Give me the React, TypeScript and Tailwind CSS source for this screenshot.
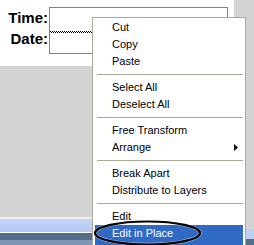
import React from "react";

type Item = { label?: string; sep?: boolean; arrow?: boolean; active?: boolean };

const items: Item[] = [
  { label: "Cut" },
  { label: "Copy" },
  { label: "Paste" },
  { sep: true },
  { label: "Select All" },
  { label: "Deselect All" },
  { sep: true },
  { label: "Free Transform" },
  { label: "Arrange", arrow: true },
  { sep: true },
  { label: "Break Apart" },
  { label: "Distribute to Layers" },
  { sep: true },
  { label: "Edit" },
  { label: "Edit in Place", active: true },
];

export default function App() {
  return (
    <div className="relative w-[254px] h-[245px] overflow-hidden flex flex-col bg-[#d4d4d4]">
      {/* top area */}
      <div className="flex h-[66px]">
        <div className="w-[234px] h-full bg-white flex">
          <div
            className="w-[49px] pt-[7px] pr-[1px] text-right text-[15px] leading-[21px] font-bold text-black"
            style={{ fontFamily: '"Liberation Sans", Arial, sans-serif' }}
          >
            <div>Time:</div>
            <div>Date:</div>
          </div>
          <div className="mt-[7px] w-[179px] h-[47px] border border-[#2f97e5] relative">
            <svg className="absolute left-0 top-[23px]" width="60" height="2">
              <line x1="0" y1="0.5" x2="60" y2="0.5" stroke="#000" strokeDasharray="1 1" />
              <line x1="1" y1="1.5" x2="60" y2="1.5" stroke="#000" strokeDasharray="1 1" />
            </svg>
          </div>
        </div>
        <div className="flex-1 bg-[#d4d4d4]" />
      </div>
      {/* bottom area */}
      <div className="flex-1 flex">
        <div className="flex-1 flex flex-col">
          <div className="flex-1 bg-[#d4d4d4]" />
          <div className="h-[2px] bg-[#f0f0e2]" />
          <div className="h-[13px] bg-gradient-to-b from-[#c3d5f8] to-[#b3c9f3]" />
          <div className="h-[1px] bg-white" />
          <div className="h-[7px] bg-[#566d8a]" />
          <div className="h-[5px] bg-[#7f96b4]" />
        </div>
        <div className="w-[8px] flex flex-col">
          <div className="flex-1 bg-[#d4d4d4]" />
          <div className="h-[10px] bg-[#bcd0f6]" />
          <div className="h-[6px] bg-[#566d8a]" />
        </div>
      </div>

      {/* context menu */}
      <div
        className="absolute left-[92px] top-[17px] w-[154px] h-[240px] bg-white border border-[#aca899] pt-[1px] text-[11px] text-black"
        style={{ fontFamily: '"Liberation Sans", Arial, sans-serif' }}
      >
        {items.map((it, i) =>
          it.sep ? (
            <div key={i} className="h-[9px] flex items-center pl-[4px] pr-[2px]">
              <div className="h-[1px] w-full bg-[#aca899]" />
            </div>
          ) : (
            <div
              key={i}
              className={
                it.active
                  ? "h-[20px] mx-[2px] pl-[17px] leading-[17px] bg-[#316ac5] text-white"
                  : "h-[17px] mx-[2px] pl-[17px] pr-[5px] leading-[17px] flex items-center justify-between"
              }
            >
              <span>{it.label}</span>
              {it.arrow && (
                <svg width="4" height="7" viewBox="0 0 4 7">
                  <path d="M0 0 L4 3.5 L0 7 Z" fill="#000" />
                </svg>
              )}
            </div>
          )
        )}
      </div>

      {/* ellipse annotation */}
      <svg className="absolute left-[90px] top-[218px]" width="116" height="30">
        <ellipse cx="57.5" cy="15" rx="52.5" ry="11.5" fill="none" stroke="#fff" strokeWidth="3.5" opacity="0.5" />
        <ellipse cx="57.5" cy="15" rx="52.5" ry="11.5" fill="none" stroke="#000" strokeWidth="2.2" />
      </svg>
    </div>
  );
}
